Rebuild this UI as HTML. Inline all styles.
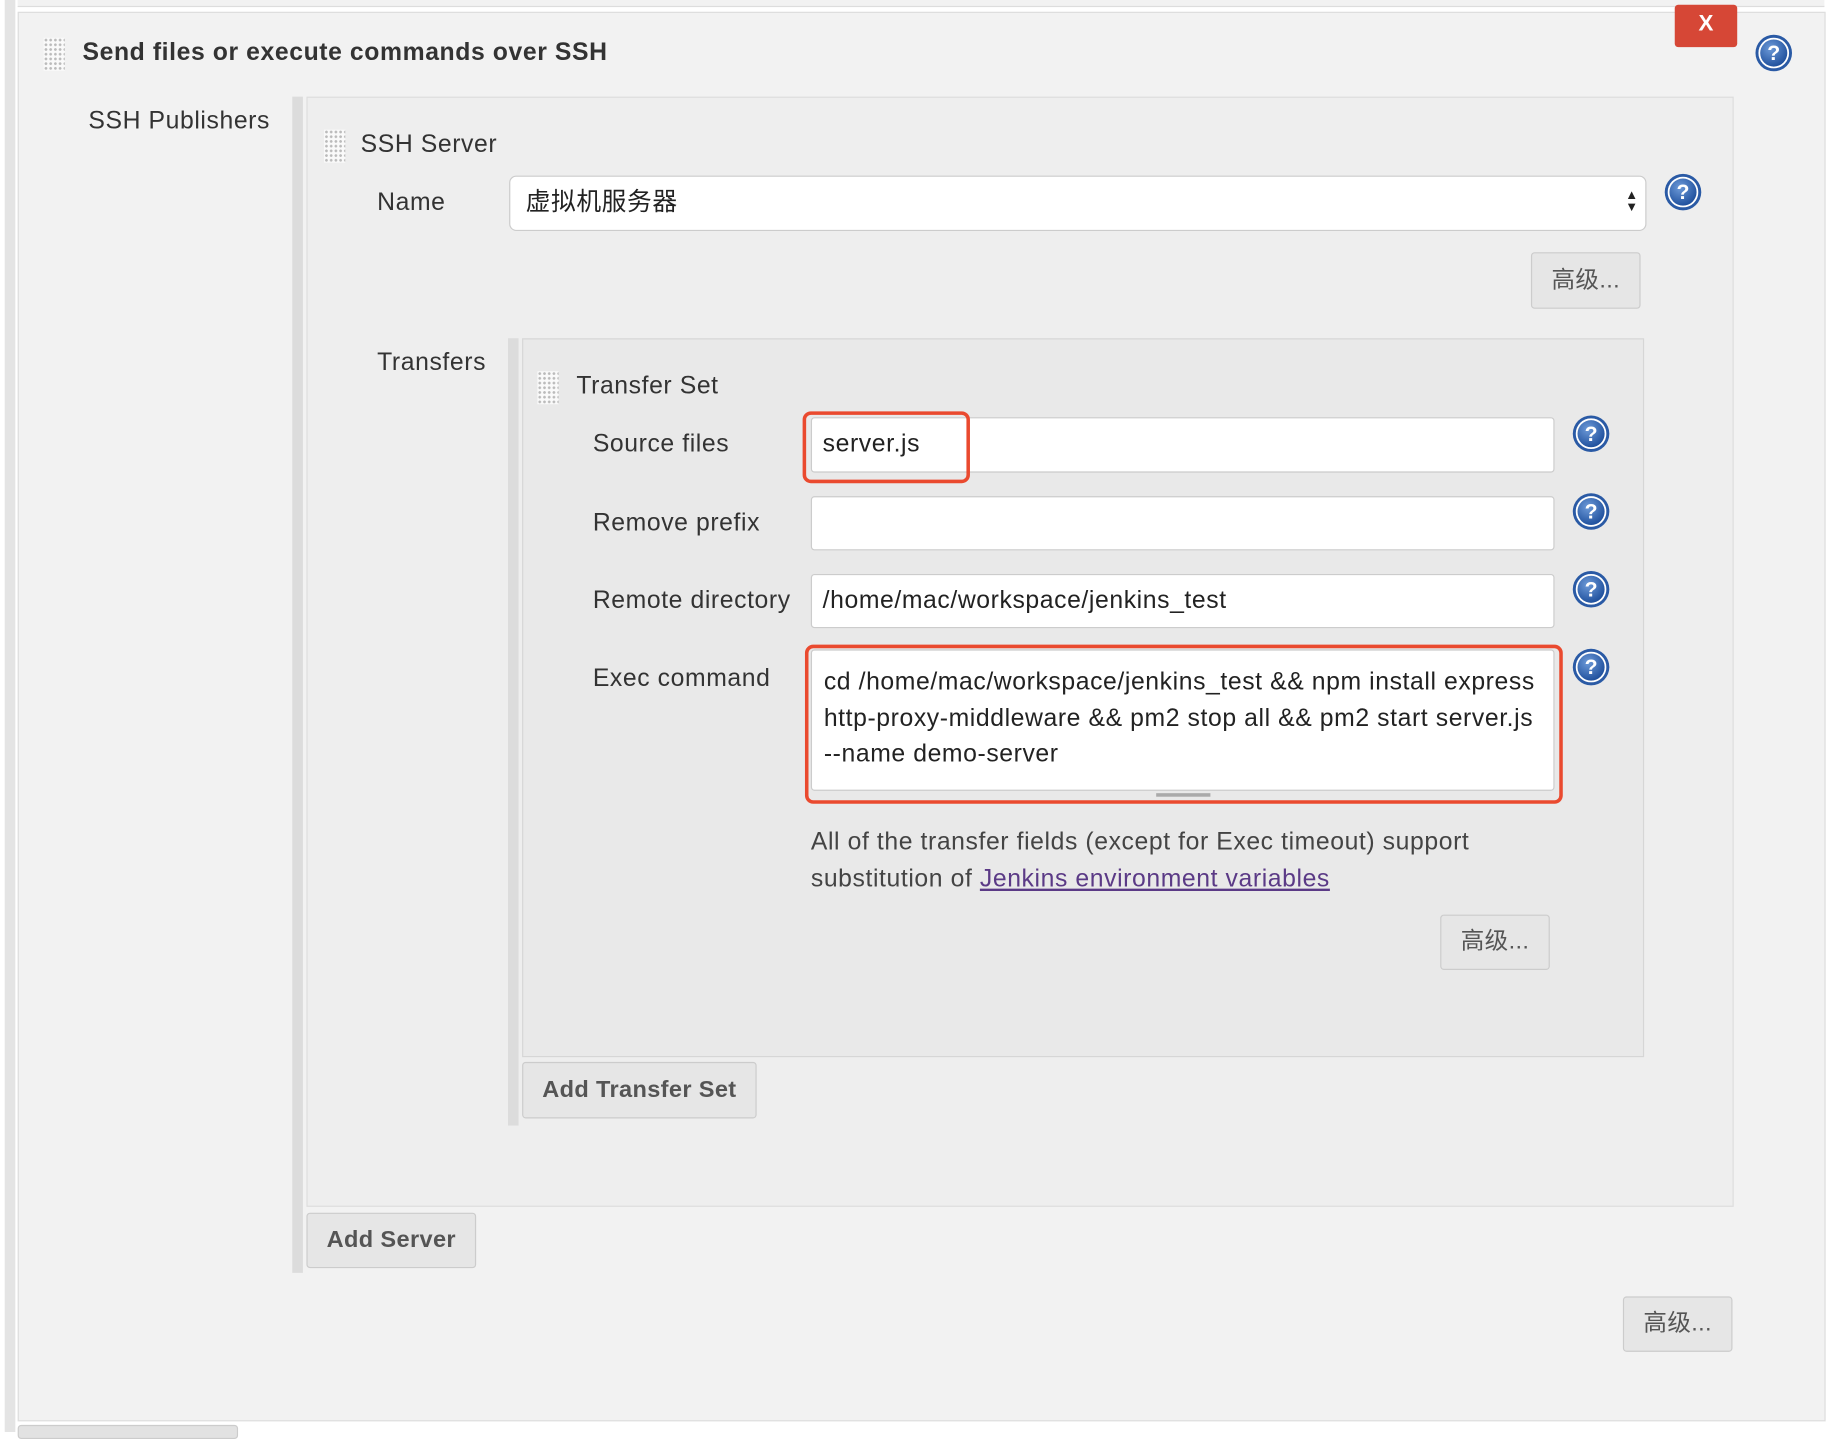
<!DOCTYPE html>
<html><head><meta charset="utf-8">
<style>
html,body{margin:0;padding:0;width:1848px;height:1432px;overflow:hidden;background:#fff;}
#w{position:absolute;left:0;top:0;width:1568px;height:1215px;transform:scale(1.17857);transform-origin:0 0;background:#fff;font-family:"Liberation Sans","Noto Sans CJK SC",sans-serif;color:#333;}
.a{position:absolute;}
.lbl{position:absolute;font-size:21px;letter-spacing:0.5px;color:#333;line-height:24px;}
.grip{position:absolute;width:18px;height:28px;background-image:radial-gradient(circle,#bbb 1px,transparent 1.3px);background-size:4px 4px;background-color:#fafafa;}
.inp{position:absolute;background:#fff;border:1px solid #ccc;border-radius:3px;box-sizing:border-box;font-size:21px;letter-spacing:0.5px;color:#222;padding-left:9px;line-height:44px;}
.btn{position:absolute;background:#e6e6e6;border:1px solid #ccc;border-radius:3px;box-sizing:border-box;font-size:20px;letter-spacing:0.3px;color:#555;text-align:center;font-weight:bold;}
.help{position:absolute;width:26px;height:26px;border-radius:50%;background:radial-gradient(circle at 40% 35%,#6d9ad8,#1e4f9c 70%);box-shadow:0 0 0 1.5px #fff inset,0 0 0 2.5px #2a5aa5;color:#fff;font-weight:bold;font-size:18px;line-height:26px;text-align:center;font-family:"Liberation Sans",sans-serif;}
.red{position:absolute;border:3px solid #ea4a2f;border-radius:7px;box-sizing:border-box;}
</style></head><body><div id="w">
<div class="a" style="left:4px;top:0;width:9px;height:1215px;background:#e4e4e4"></div>
<div class="a" style="left:15px;top:0;width:1533px;height:5px;border-bottom:1px solid #ddd;background:#f2f2f2"></div>
<div class="a" style="left:15px;top:10px;width:1532px;height:1194px;background:#f2f2f2;border:1px solid #ddd"></div>
<div class="a" style="left:15px;top:1209px;width:185px;height:10px;background:#e2e2e2;border:1px solid #ccc;border-radius:3px"></div>
<div class="grip" style="left:37px;top:32px"></div>
<div class="lbl" style="left:70px;top:33px;font-weight:bold;color:#333">Send files or execute commands over SSH</div>
<div class="a" style="left:1421px;top:4px;width:53px;height:36px;background:#d64736;border-radius:3px;color:#fff;font-weight:bold;font-size:19px;text-align:center;line-height:34px">X</div>
<div class="help" style="left:1492px;top:32px">?</div>
<div class="lbl" style="left:75px;top:91px">SSH Publishers</div>
<div class="a" style="left:248px;top:82px;width:9px;height:998px;background:#dcdcdc"></div>
<div class="a" style="left:260px;top:82px;width:1209px;height:940px;background:#eee;border:1px solid #ddd"></div>
<div class="grip" style="left:275px;top:110px"></div>
<div class="lbl" style="left:306px;top:111px">SSH Server</div>
<div class="lbl" style="left:320px;top:160px">Name</div>
<div class="inp" style="left:432px;top:149px;width:965px;height:47px;border-radius:6px;padding-left:13px;">虚拟机服务器</div>
<div class="a" style="left:1379px;top:161px;font-size:11px;line-height:10px;color:#222">▲<br>▼</div>
<div class="help" style="left:1415px;top:150px">?</div>
<div class="btn" style="left:1299px;top:214px;width:93px;height:48px;line-height:46px;font-weight:normal">高级...</div>
<div class="lbl" style="left:320px;top:296px">Transfers</div>
<div class="a" style="left:431px;top:287px;width:9px;height:668px;background:#dcdcdc"></div>
<div class="a" style="left:443px;top:287px;width:950px;height:608px;background:#e9e9e9;border:1px solid #d6d6d6"></div>
<div class="grip" style="left:456px;top:315px"></div>
<div class="lbl" style="left:489px;top:316px">Transfer Set</div>
<div class="lbl" style="left:503px;top:365px">Source files</div>
<div class="inp" style="left:688px;top:354px;width:631px;height:47px">server.js</div>
<div class="red" style="left:681px;top:349px;width:142px;height:61px"></div>
<div class="help" style="left:1337px;top:355px">?</div>
<div class="lbl" style="left:503px;top:432px">Remove prefix</div>
<div class="inp" style="left:688px;top:421px;width:631px;height:46px"></div>
<div class="help" style="left:1337px;top:421px">?</div>
<div class="lbl" style="left:503px;top:498px">Remote directory</div>
<div class="inp" style="left:688px;top:487px;width:631px;height:46px">/home/mac/workspace/jenkins_test</div>
<div class="help" style="left:1337px;top:487px">?</div>
<div class="lbl" style="left:503px;top:564px">Exec command</div>
<div class="inp" style="left:688px;top:551px;width:631px;height:120px;line-height:30.5px;padding-top:12px;padding-left:10px;white-space:nowrap;overflow:hidden">cd /home/mac/workspace/jenkins_test &amp;&amp; npm install express<br>http-proxy-middleware &amp;&amp; pm2 stop all &amp;&amp; pm2 start server.js<br>--name demo-server</div>
<div class="a" style="left:981px;top:673px;width:46px;height:3px;background:#aaa"></div>
<div class="red" style="left:683px;top:547px;width:643px;height:135px"></div>
<div class="help" style="left:1337px;top:553px">?</div>
<div class="lbl" style="left:688px;top:700px;line-height:30.5px;color:#444">All of the transfer fields (except for Exec timeout) support<br>substitution of <span style="color:#5b3a86;text-decoration:underline">Jenkins environment variables</span></div>
<div class="btn" style="left:1222px;top:776px;width:93px;height:47px;line-height:45px;font-weight:normal">高级...</div>
<div class="btn" style="left:443px;top:901px;width:199px;height:48px;line-height:46px">Add Transfer Set</div>
<div class="btn" style="left:260px;top:1029px;width:144px;height:47px;line-height:45px">Add Server</div>
<div class="btn" style="left:1377px;top:1100px;width:93px;height:47px;line-height:45px;font-weight:normal">高级...</div>
</div></body></html>
